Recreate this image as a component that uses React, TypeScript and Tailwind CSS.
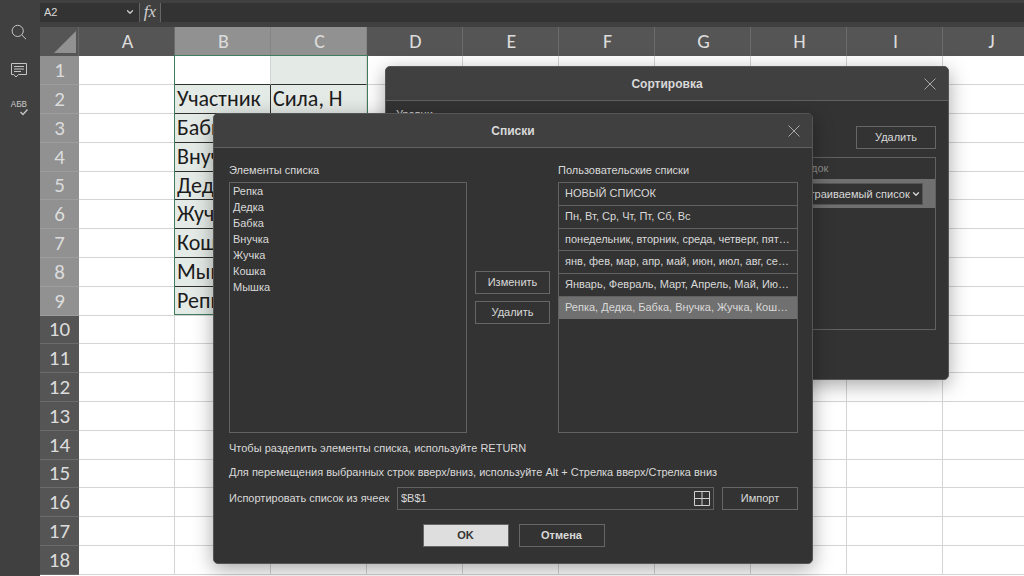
import React, { useState } from 'react';
import { ChevronDown } from 'lucide-react';

const columns = ['A', 'B', 'C', 'D', 'E', 'F', 'G', 'H', 'I', 'J'];

const sheetRows = Array.from({ length: 18 }, (_, i) => i + 1);

const cells: Record<string, string> = {
  B2: 'Участник',
  C2: 'Сила, Н',
  B3: 'Бабка',
  B4: 'Внучка',
  B5: 'Дедка',
  B6: 'Жучка',
  B7: 'Кошка',
  B8: 'Мышка',
  B9: 'Репка',
};

const customLists = [
  'НОВЫЙ СПИСОК',
  'Пн, Вт, Ср, Чт, Пт, Сб, Вс',
  'понедельник, вторник, среда, четверг, пятница, суббота, воскресенье',
  'янв, фев, мар, апр, май, июн, июл, авг, сен, окт, ноя, дек',
  'Январь, Февраль, Март, Апрель, Май, Июнь, Июль, Август',
  'Репка, Дедка, Бабка, Внучка, Жучка, Кошка, Мышка',
];

function CloseIcon() {
  return (
    <svg className="w-3 h-3" viewBox="0 0 12 12" fill="none" stroke="#a8a8a8" strokeWidth="1">
      <path d="M0.5 0.5 L11.5 11.5 M11.5 0.5 L0.5 11.5" />
    </svg>
  );
}

function DialogHeader({ title }: { title: string }) {
  return (
    <div className="relative flex items-center justify-center h-[34px] bg-[#404040] border-b border-[#616161]">
      <h2 className="text-[12px] leading-4 font-bold">{title}</h2>
      <button aria-label="Закрыть" className="absolute right-3 top-[11px]">
        <CloseIcon />
      </button>
    </div>
  );
}

function Button({ children, className = '' }: { children: React.ReactNode; className?: string }) {
  return (
    <button className={`h-[23px] pb-px border border-[#666] text-center leading-4 ${className}`}>
      {children}
    </button>
  );
}

function Sidebar() {
  return (
    <nav className="flex flex-col items-center w-10 shrink-0 pt-6 pr-0.5 gap-[22px] bg-[#404040] text-[#c4c4c4]">
      <button aria-label="Поиск">
        <svg className="w-4 h-4" viewBox="0 0 16 16" fill="none" stroke="currentColor">
          <circle cx="6.7" cy="6.9" r="5.6" />
          <path d="M10.8 11 L15 15.2" />
        </svg>
      </button>
      <button aria-label="Комментарии">
        <svg className="w-[18px] h-4" viewBox="0 0 18 16" fill="none" stroke="currentColor">
          <path d="M1.5 1.5 H16.5 V12.5 H8.5 L6 15 L3.8 12.5 H1.5 Z" />
          <path d="M4 4.5 H14 M4 7 H14 M4 9.5 H11" />
        </svg>
      </button>
      <button aria-label="Проверка орфографии" className="flex flex-col items-end w-[18px] h-4 pt-px">
        <span className="text-[9px] leading-2 pr-px font-['Liberation_Mono',monospace]">АБВ</span>
        <svg className="w-2 h-[7px]" viewBox="0 0 8 7" fill="none" stroke="currentColor" strokeWidth="1.5">
          <path d="M0.5 3 L3 5.5 L7.5 0.5" />
        </svg>
      </button>
    </nav>
  );
}

function FormulaBar() {
  return (
    <div className="flex h-[27px] pt-[3px] pb-[5px] bg-[#404040]">
      <div className="flex items-center w-[99px] px-1 pb-0.5 bg-[#333]">
        <input
          aria-label="Имя ячейки"
          defaultValue="A2"
          className="w-full min-w-0 bg-transparent outline-none text-[11px] leading-4 text-[#d9d9d9]"
        />
        <ChevronDown className="w-2.5 h-2.5 shrink-0 text-[#ccc]" strokeWidth={3} />
      </div>
      <button className="w-[22px] pb-0.5 border-x border-[#666] text-[17px] leading-4 italic text-[#d0d0d0] font-['Liberation_Serif',serif]">
        fx
      </button>
      <input aria-label="Строка формул" className="flex-1 bg-[#333] outline-none px-2" />
    </div>
  );
}

function cellClass(col: string, row: number) {
  const selected = (col === 'B' || col === 'C') && row <= 9;
  if (!selected) return 'border-[#d4d4d4]';
  const bottom = row < 9 ? 'border-b-[#303030]' : 'border-b-[#d4d4d4]';
  const right = col === 'B' && row > 1 ? 'border-r-[#303030]' : 'border-r-[#d4d4d4]';
  const fill = col === 'B' && row === 1 ? 'bg-white' : 'bg-[#e4eae6]';
  return `${bottom} ${right} ${fill}`;
}

function Sheet() {
  return (
    <div className="relative flex-1 overflow-hidden bg-white font-[Carlito,Lato,'Open_Sans',sans-serif]">
      <table className="table-fixed w-[999px] border-separate border-spacing-0 text-[21px] leading-6 text-[#1c1c1c]">
        <colgroup>
          <col className="w-[39px]" />
          {columns.map((c) => (
            <col key={c} className="w-24" />
          ))}
        </colgroup>
        <thead>
          <tr className="h-[29px]">
            <th className="p-0 bg-[#555] border-r border-[#666]">
              <svg className="w-[22px] h-[22px] ml-auto mr-0.5" viewBox="0 0 22 22">
                <path d="M22 0 V22 H0 Z" fill="#919191" />
              </svg>
            </th>
            {columns.map((c) => (
              <th
                key={c}
                className={`p-0 pb-px pl-0.5 text-[20px] leading-6 font-normal border-r ${
                  c === 'B' || c === 'C'
                    ? 'bg-[#919191] border-[#858585] text-[#dcdcdc]'
                    : 'bg-[#555] border-[#6b6b6b] text-[#dcdcdc]'
                }`}
              >
                {c}
              </th>
            ))}
          </tr>
        </thead>
        <tbody>
          {sheetRows.map((row) => (
            <tr key={row} className={row % 5 === 0 ? 'h-7' : 'h-[29px]'}>
              <th
                className={`p-0 pb-px font-normal border-b text-[#dcdcdc] ${
                  row <= 9 ? 'bg-[#919191] border-[#9d9d9d]' : 'bg-[#555] border-[#6b6b6b]'
                }`}
              >
                {row}
              </th>
              {columns.map((c) => (
                <td
                  key={c}
                  className={`p-0 pl-0.5 text-[22px] leading-6 border-r border-b whitespace-nowrap ${cellClass(c, row)}`}
                >
                  {cells[c + row]}
                </td>
              ))}
            </tr>
          ))}
        </tbody>
      </table>

      {/* selection frame over B1:C9 */}
      <div className="absolute left-[134px] top-7 w-[194px] h-[260px] border border-[#3f7d5c] pointer-events-none" />
    </div>
  );
}

function SortDialog() {
  return (
    <section
      aria-label="Сортировка"
      className="absolute left-[385px] top-[66px] w-[564px] h-[314px] flex flex-col rounded-[5px] overflow-hidden border border-[#555] bg-[#333] shadow-[0_5px_20px_rgba(0,0,0,0.35)]"
    >
      <DialogHeader title="Сортировка" />
      <div className="flex flex-col flex-1 pl-2.5 pr-3 pt-[5px] pb-[49px]">
        <p className="leading-4">Уровни</p>
        <div className="flex justify-end mt-1">
          <Button className="w-20">Удалить</Button>
        </div>
        <div className="flex flex-col flex-1 mt-2 border border-[#616161]">
          <div className="flex justify-end h-[21px] items-center">
            <span className="w-[150px] text-[#8c8c8c]">Порядок</span>
          </div>
          <div className="flex justify-end items-center h-[29px] pr-3 bg-[#707070]">
            <div className="relative flex items-center">
              <select
                aria-label="Порядок"
                className="w-[138px] h-[22px] pl-1 appearance-none border border-[#555] bg-[#333] leading-4"
              >
                <option>Настраиваемый список</option>
              </select>
              <ChevronDown className="absolute right-0.5 w-2.5 h-2.5 pointer-events-none" strokeWidth={3} />
            </div>
          </div>
        </div>
      </div>
    </section>
  );
}

function ListsDialog() {
  const [active, setActive] = useState(5);

  return (
    <section
      aria-label="Списки"
      className="absolute left-[213px] top-[113px] w-[600px] rounded-[5px] overflow-hidden border border-[#555] bg-[#333] shadow-[0_5px_20px_rgba(0,0,0,0.35)]"
    >
      <DialogHeader title="Списки" />
      <div className="pl-[15px] pr-3.5 pt-3.5 pb-4">
        <div className="flex gap-2">
          <div className="w-[238px]">
            <label htmlFor="items" className="block leading-4 mb-1">
              Элементы списка
            </label>
            <textarea
              id="items"
              className="block w-full h-[251px] px-[3px] py-0 resize-none outline-none border border-[#616161] bg-transparent leading-4"
              defaultValue={'Репка\nДедка\nБабка\nВнучка\nЖучка\nКошка\nМышка'}
            />
          </div>
          <div className="flex flex-col gap-[7px] pt-[109px] w-[75px]">
            <Button>Изменить</Button>
            <Button>Удалить</Button>
          </div>
          <div className="flex-1 min-w-0">
            <p id="lists-label" className="leading-4 mb-1">
              Пользовательские списки
            </p>
            <ul aria-labelledby="lists-label" className="h-[251px] border border-[#616161]">
              {customLists.map((item, i) => (
                <li
                  key={item}
                  onClick={() => setActive(i)}
                  className={`px-1.5 pt-0.5 border-b truncate leading-4 ${
                    i % 3 === 2 ? 'h-[22px]' : 'h-[23px]'
                  } ${i === active ? 'bg-[#707070] border-[#707070]' : 'border-[#616161]'}`}
                >
                  {item}
                </li>
              ))}
            </ul>
          </div>
        </div>

        <p className="mt-[7px] leading-4">Чтобы разделить элементы списка, используйте RETURN</p>
        <p className="mt-2 leading-4">
          Для перемещения выбранных строк вверх/вниз, используйте Alt + Стрелка вверх/Стрелка вниз
        </p>

        <div className="flex items-center mt-[7px]">
          <label htmlFor="range" className="w-[168px] pb-px leading-4 whitespace-nowrap">
            Испортировать список из ячеек
          </label>
          <div className="flex items-center flex-1 h-[23px] px-[3px] border border-[#616161]">
            <input id="range" defaultValue="$B$1" className="flex-1 min-w-0 pb-px bg-transparent outline-none leading-4" />
            <button aria-label="Выбрать диапазон">
              <svg className="w-4 h-[15px]" viewBox="0 0 16 15" fill="none" stroke="#d0d0d0">
                <path d="M0.5 0.5 H15.5 V14.5 H0.5 Z M8 0.5 V14.5 M0.5 7.5 H15.5" />
              </svg>
            </button>
          </div>
          <Button className="w-[76px] ml-2">Импорт</Button>
        </div>

        <div className="flex justify-center gap-2.5 mt-3.5">
          <Button className="w-[86px] font-bold bg-[#dedede] text-[#333]">OK</Button>
          <Button className="w-[86px] font-bold">Отмена</Button>
        </div>
      </div>
    </section>
  );
}

export default function App() {
  return (
    <div className="relative flex h-screen overflow-hidden bg-[#404040] font-['Liberation_Sans',Arial,sans-serif] text-[11px] text-[#d9d9d9]">
      <Sidebar />
      <main className="flex flex-col flex-1 min-w-0">
        <FormulaBar />
        <Sheet />
      </main>
      <SortDialog />
      <ListsDialog />
    </div>
  );
}
